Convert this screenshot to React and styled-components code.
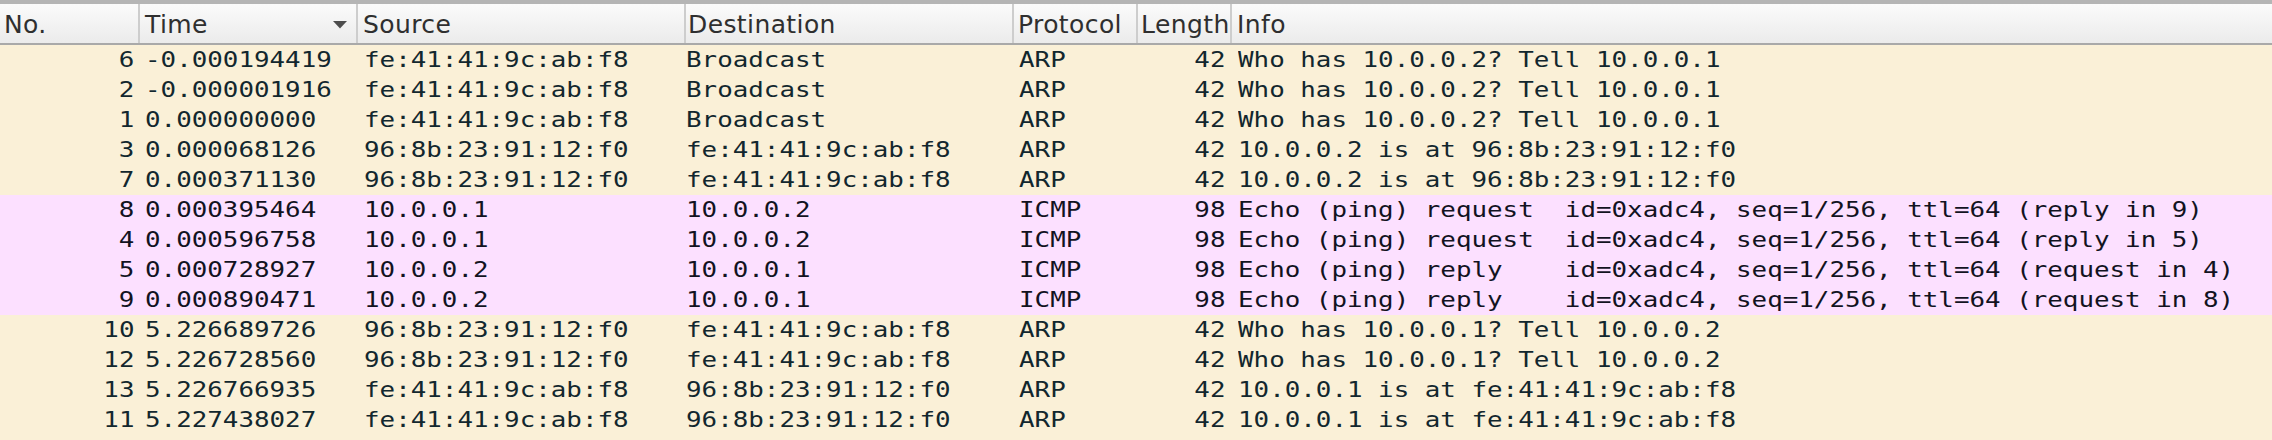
import React from "react";
import styled, { createGlobalStyle } from "styled-components";

const GlobalStyle = createGlobalStyle`
  html, body { margin: 0; padding: 0; background: #faf0d7; }
  body { font-family: "DejaVu Sans", sans-serif; }
`;

const COLUMNS = [
  { key: "no", title: "No.", width: 140, align: "right", hPad: 4, bPadL: 0, bPadR: 6 },
  { key: "time", title: "Time", width: 218, align: "left", hPad: 5, bPadL: 5, sorted: true },
  { key: "src", title: "Source", width: 328, align: "left", hPad: 5, bPadL: 6 },
  { key: "dst", title: "Destination", width: 328, align: "left", hPad: 2, bPadL: 0 },
  { key: "proto", title: "Protocol", width: 124, align: "left", hPad: 4, bPadL: 5 },
  { key: "len", title: "Length", width: 94, align: "right", hPad: 3, bPadL: 0, bPadR: 7 },
  { key: "info", title: "Info", width: 0, align: "left", hPad: 5, bPadL: 6 },
];

const A = "fe:41:41:9c:ab:f8";
const B = "96:8b:23:91:12:f0";

const PACKETS = [
  ["6", "-0.000194419", A, "Broadcast", "ARP", "42", "Who has 10.0.0.2? Tell 10.0.0.1"],
  ["2", "-0.000001916", A, "Broadcast", "ARP", "42", "Who has 10.0.0.2? Tell 10.0.0.1"],
  ["1", "0.000000000", A, "Broadcast", "ARP", "42", "Who has 10.0.0.2? Tell 10.0.0.1"],
  ["3", "0.000068126", B, A, "ARP", "42", "10.0.0.2 is at 96:8b:23:91:12:f0"],
  ["7", "0.000371130", B, A, "ARP", "42", "10.0.0.2 is at 96:8b:23:91:12:f0"],
  ["8", "0.000395464", "10.0.0.1", "10.0.0.2", "ICMP", "98", "Echo (ping) request  id=0xadc4, seq=1/256, ttl=64 (reply in 9)"],
  ["4", "0.000596758", "10.0.0.1", "10.0.0.2", "ICMP", "98", "Echo (ping) request  id=0xadc4, seq=1/256, ttl=64 (reply in 5)"],
  ["5", "0.000728927", "10.0.0.2", "10.0.0.1", "ICMP", "98", "Echo (ping) reply    id=0xadc4, seq=1/256, ttl=64 (request in 4)"],
  ["9", "0.000890471", "10.0.0.2", "10.0.0.1", "ICMP", "98", "Echo (ping) reply    id=0xadc4, seq=1/256, ttl=64 (request in 8)"],
  ["10", "5.226689726", B, A, "ARP", "42", "Who has 10.0.0.1? Tell 10.0.0.2"],
  ["12", "5.226728560", B, A, "ARP", "42", "Who has 10.0.0.1? Tell 10.0.0.2"],
  ["13", "5.226766935", A, B, "ARP", "42", "10.0.0.1 is at fe:41:41:9c:ab:f8"],
  ["11", "5.227438027", A, B, "ARP", "42", "10.0.0.1 is at fe:41:41:9c:ab:f8"],
];

const PALETTE = {
  ARP: { bg: "#faf0d7", fg: "#12272e" },
  ICMP: { bg: "#fce0ff", fg: "#12131f" },
};

const Window = styled.div`
  display: flex;
  flex-direction: column;
  height: 100vh;
  overflow: hidden;
  border-top: 4px solid #b5b5b5;
  box-sizing: border-box;
`;

const HeaderBar = styled.div`
  display: flex;
  flex: 0 0 auto;
  height: 41px;
  box-sizing: border-box;
  border-bottom: 2px solid #a9a9a9;
  background: linear-gradient(to bottom, #fbfbfb 0%, #f3f3f3 50%, #ebebeb 100%);
`;

const HeaderCell = styled.div`
  display: flex;
  align-items: flex-start;
  justify-content: space-between;
  box-sizing: border-box;
  flex: ${(p) => (p.$width ? `0 0 ${p.$width}px` : "1 1 auto")};
  height: 39px;
  padding: 2px 0 0 ${(p) => p.$pad}px;
  line-height: 37px;
  font-family: "DejaVu Sans", "Noto Sans", sans-serif;
  font-size: 25px;
  letter-spacing: 0.4px;
  color: #2f2f2f;
  border-right: ${(p) => (p.$width ? "2px solid #cdcdcd" : "none")};
  white-space: nowrap;
  overflow: hidden;
`;

const SortArrow = styled.svg`
  flex: 0 0 auto;
  width: 14px;
  height: 8px;
  margin: 15px 9px 0 0;
`;

const List = styled.div`
  flex: 1 1 auto;
  background: #faf0d7;
`;

const Row = styled.div`
  display: flex;
  height: 30px;
  background: ${(p) => p.$bg};
  color: ${(p) => p.$fg};
`;

const Cell = styled.div`
  box-sizing: border-box;
  flex: ${(p) => (p.$width ? `0 0 ${p.$width}px` : "1 1 auto")};
  padding: 0 ${(p) => p.$padR || 0}px 0 ${(p) => p.$padL || 0}px;
  text-align: ${(p) => p.$align};
  font-family: "DejaVu Sans Mono", "Liberation Mono", monospace;
  font-size: 22px;
  line-height: 30px;
  white-space: pre;
  overflow: hidden;
`;

const CellText = styled.span`
  display: inline-block;
  transform: scaleX(1.175);
  transform-origin: ${(p) => (p.$align === "right" ? "right" : "left")} center;
`;

export default function App() {
  return (
    <>
      <GlobalStyle />
      <Window>
        <HeaderBar>
          {COLUMNS.map((c) => (
            <HeaderCell key={c.key} $width={c.width} $pad={c.hPad}>
              <span>{c.title}</span>
              {c.sorted && (
                <SortArrow viewBox="0 0 14 8">
                  <polygon points="0,0 14,0 7,7.5" fill="#4d4d4d" />
                </SortArrow>
              )}
            </HeaderCell>
          ))}
        </HeaderBar>
        <List>
          {PACKETS.map((p) => {
            const pal = PALETTE[p[4]];
            return (
              <Row key={p[0]} $bg={pal.bg} $fg={pal.fg}>
                {COLUMNS.map((c, i) => (
                  <Cell
                    key={c.key}
                    $width={c.width}
                    $align={c.align}
                    $padL={c.bPadL}
                    $padR={c.bPadR}
                  >
                    <CellText $align={c.align}>{p[i]}</CellText>
                  </Cell>
                ))}
              </Row>
            );
          })}
        </List>
      </Window>
    </>
  );
}
